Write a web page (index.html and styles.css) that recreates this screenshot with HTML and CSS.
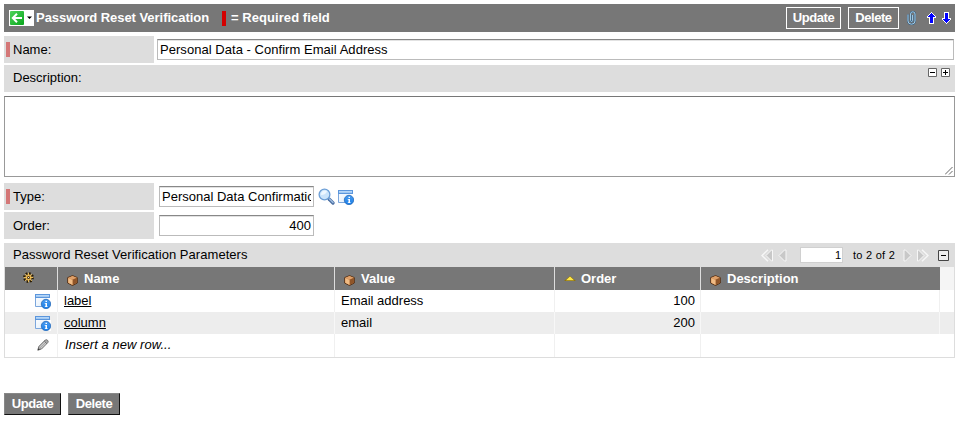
FILE: index.html
```html
<!DOCTYPE html>
<html lang="en">
<head>
<meta charset="utf-8">
<title>Password Reset Verification</title>
<link rel="stylesheet" href="styles.css">
</head>
<body>
<svg class="defs" width="0" height="0">
  <defs>
    <linearGradient id="gBlue" x1="0" y1="0" x2="0" y2="1"><stop offset="0" stop-color="#4a9cf0"/><stop offset="1" stop-color="#1a7fe8"/></linearGradient>
    <linearGradient id="gWin" x1="0" y1="0" x2="1" y2="1"><stop offset="0" stop-color="#fff"/><stop offset="1" stop-color="#dcebfa"/></linearGradient>
    <linearGradient id="gGreen" x1="0" y1="0" x2="1" y2="1"><stop offset="0" stop-color="#4fd35a"/><stop offset="1" stop-color="#08a51c"/></linearGradient>
    <symbol id="info" viewBox="0 0 16 15">
      <path d="M.5 .5h14v12H.5z" fill="url(#gWin)" stroke="#7ba6dc"/>
      <path d="M0 0h15v4H0z" fill="#5c96dc"/><path d="M1 1h13v1.800H1z" fill="#b5d6f8"/>
      <path d="M9 15V7.500h3V4h4v11z" fill="#fff"/>
      <circle cx="11" cy="10" r="4.700" fill="url(#gBlue)" stroke="#2468b8" stroke-width=".8"/>
      <path d="M10.500 6.800H12v1.300h-1.500zM9.700 9H12v3.200h.6v.8H9.800v-.8h.7V9.800h-.8z" fill="#fff"/>
    </symbol>
    <symbol id="box" viewBox="0 0 11 11">
      <path d="M5.500 .6 10.300 2.600V8L5.500 10.500.7 8V2.600z" fill="#c98247" stroke="#4c2a12" stroke-width=".9"/>
      <path d="M5.500 1 9.800 2.700 5.500 4.800 1.200 2.700z" fill="#dea06a"/>
      <path d="M5.500 4.800 9.900 2.800V7.800L5.500 10z" fill="#8f5529"/>
      <path d="M1.200 3 5.500 4.900V10L1.200 7.800z" fill="#f0bb84"/>
    </symbol>
  </defs>
</svg>

<header class="bar">
  <span class="back">
    <svg width="25" height="16" viewBox="0 0 25 16"><path d="M0 0h25v16H0z" fill="#fff"/><rect x="1" y="1" width="14" height="14" rx="1" fill="url(#gGreen)"/><path d="M8 3.800 3.800 8 8 12.200M4 8h9" fill="none" stroke="#fff" stroke-width="2"/><path d="M18 6.500h5L20.500 9z" fill="#000"/></svg>
  </span>
  <h1 class="title">Password Reset Verification</h1>
  <span class="mark"></span>
  <span class="legend">= Required field</span>
  <button class="hbtn hupdate">Update</button>
  <button class="hbtn hdelete">Delete</button>
  <svg class="clip" width="9" height="14" viewBox="0 0 9 14" fill="none"><path d="M1 3.500V10a3.500 3.200 0 0 0 7 0V3a2.200 2.200 0 0 0-4.400 0v6.500a1 1 0 0 0 2 0V4" stroke="#31587a" stroke-width="1.800"/><path d="M1 3.500V10a3.500 3.200 0 0 0 7 0V3a2.200 2.200 0 0 0-4.400 0v6.500a1 1 0 0 0 2 0V4" stroke="#a9d3ee" stroke-width="1"/></svg>
  <svg class="up" width="9" height="12" viewBox="0 0 9 12"><path d="M4 0h1v1h1v1h1v1h1v1h1v2H7v6H2V6H0V4h1V3h1V2h1V1h1z" fill="#fff"/><path d="M4 1h1v1h1v1h1v1h1v1H6v6H3V5H1V4h1V3h1V2h1z" fill="#00f"/></svg>
  <svg class="down" width="9" height="12" viewBox="0 0 9 12"><path d="M2 0h5v6h2v2H8v1H7v1H6v1H5v1H4v-1H3v-1H2V9H1V8H0V6h2z" fill="#fff"/><path d="M3 1h3v6h2v1H7v1H6v1H5v1H4v-1H3V9H2V8H1V7h2z" fill="#00f"/></svg>
</header>

<main>
  <div class="row name-row">
    <label class="label required">Name:</label>
    <div class="field wide"><span class="t-value">Personal Data - Confirm Email Address</span></div>
  </div>
  <div class="desc">
    <span>Description:</span>
    <svg class="size" width="22" height="9" viewBox="0 0 22 9"><path d="M.5 .5h8v8h-8zM13.500 .5h8v8h-8z" fill="#fff" stroke="#666"/><path d="M2 4h5v1H2zM15 4h5v1h-5zM17 2h1v5h-1z"/></svg>
  </div>
  <div class="area"><svg width="8" height="8" viewBox="0 0 8 8"><path d="M0 7.500 7.500 0M4 7.500 7.500 4" stroke="#555" stroke-width=".9"/></svg></div>
  <div class="row type-row">
    <label class="label required">Type:</label>
    <div class="field short"><div class="clipped">Personal Data Confirmatic</div></div>
    <svg class="lens" width="17" height="17" viewBox="0 0 17 17"><path d="m11 11 4 4" stroke="#4a6da0" stroke-width="3.200" stroke-linecap="round"/><path d="m11.500 11 3.500 3.500" stroke="#9dbce0" stroke-width="1.400" stroke-linecap="round"/><circle cx="6.500" cy="6.500" r="5.400" fill="#cbe4fb" stroke="#6d9fd6" stroke-width="1.300"/><path d="M3 7a4 4 0 0 1 6-4Q8 7 3 7z" fill="#eef7ff"/></svg>
    <svg class="type-info" width="16" height="15"><use href="#info"/></svg>
  </div>
  <div class="row">
    <label class="label">Order:</label>
    <div class="field short num">400</div>
  </div>

  <section class="list">
    <div class="list-head">
      <h2 class="list-title">Password Reset Verification Parameters</h2>
      <svg class="prev" width="26" height="13" viewBox="0 0 26 13" fill="#c8c8c8" stroke="#f6f6f6"><path d="M11.500 1v11H10.500L5 6.500 10.500 1zM25 1v11h-1.500L18 6.500 23.500 1z"/><path d="M7 .8 1 6.500l6 5.700" fill="none" stroke-width="1.500"/></svg>
      <div class="page">1</div>
      <span class="range">to 2 of 2</span>
      <svg class="next" width="26" height="13" viewBox="0 0 26 13" fill="#c8c8c8" stroke="#f6f6f6"><path d="M1 1v11h1.500L8 6.500 2.500 1zM14.500 1v11h1L21 6.500 15.500 1z"/><path d="m19 .8 6 5.700-6 5.700" fill="none" stroke-width="1.500"/></svg>
      <svg class="collapse" width="11" height="11" viewBox="0 0 11 11"><path d="M.5 .5h10v10H.5z" fill="#eee" stroke="#444"/><path d="M3 5h5v1H3z"/></svg>
    </div>
    <div class="grid">
      <div class="th gear"><svg width="11" height="11" viewBox="0 0 11 11"><circle cx="5.500" cy="5.500" r="4.400" fill="none" stroke="#2a1b00" stroke-width="2" stroke-dasharray="1.730 1.730"/><circle cx="5.500" cy="5.500" r="3.200" fill="#e9b44c" stroke="#3a2400" stroke-width=".6"/><path d="M5.500 .8v9.400M.8 5.500h9.400M2.200 2.200l6.600 6.600M8.800 2.200 2.200 8.800" stroke="#f2c45c" stroke-width=".9"/><circle cx="5.500" cy="5.500" r="1.500" fill="#4b3310"/><circle cx="5.500" cy="5.500" r=".6" fill="#fff"/></svg></div>
      <div class="th"><svg class="box" width="11" height="11"><use href="#box"/></svg><span>Name</span></div>
      <div class="th"><svg class="box" width="11" height="11"><use href="#box"/></svg><span>Value</span></div>
      <div class="th"><svg class="sort" width="12" height="5" viewBox="0 0 12 5"><path d="M0 5 6 0l6 5z" fill="#8f7410"/><path d="M2 4.300 6 .6l4 3.700z" fill="#ffe84a"/></svg><span>Order</span></div>
      <div class="th"><svg class="box" width="11" height="11"><use href="#box"/></svg><span>Description</span></div>
      <div class="th end"></div>

      <div class="td icon"><svg width="16" height="15"><use href="#info"/></svg></div>
      <div class="td"><a>label</a></div>
      <div class="td">Email address</div>
      <div class="td right">100</div>
      <div class="td"></div>
      <div class="td end"></div>

      <div class="td alt icon"><svg width="16" height="15"><use href="#info"/></svg></div>
      <div class="td alt"><a>column</a></div>
      <div class="td alt">email</div>
      <div class="td alt right">200</div>
      <div class="td alt"></div>
      <div class="td alt end"></div>

      <div class="td last icon pencil"><svg width="12" height="12" viewBox="0 0 12 12"><path d="m.8 11.200 1-3.700L8.300 1q1.200-.8 2.300.3t.2 2.300L4.500 10z" fill="#aaa" stroke="#666" stroke-width=".9"/><path d="m2.700 8 5.800-5.600M4 9.200l5.800-5.700" stroke="#ddd" stroke-width=".8"/><path d="m.8 11.200.6-2 1.400 1.300z" fill="#333"/><path d="m7.300 2 2.700 2.700" stroke="#666"/></svg></div>
      <div class="td last"><em class="t-insert">Insert a new row...</em></div>
      <div class="td last"></div>
      <div class="td last"></div>
      <div class="td last plain"></div>
      <div class="td last plain"></div>
    </div>
  </section>
</main>

<footer class="actions">
  <button class="btn bupdate">Update</button>
  <button class="btn bdelete">Delete</button>
</footer>
</body>
</html>
```
FILE: styles.css
```css
* { box-sizing: border-box; }
body { margin: 0; padding: 4px 2px 0 4px; background: #fff; color: #000; font: 13px/16px "Liberation Sans", Arial, sans-serif; white-space: nowrap; overflow: hidden; }
svg { display: block; flex: none; }
.defs { position: absolute; }
h1, h2 { margin: 0; font-size: 13px; line-height: 16px; }
button { font: bold 13px/16px "Liberation Sans", Arial, sans-serif; letter-spacing: -0.4px; color: #fff; background: #777; padding: 0; }

.bar { display: flex; align-items: center; height: 28px; background: #777; color: #fff; font-weight: bold; padding: 0 4px 0 5px; }
.title { width: 186px; margin-left: 2px; letter-spacing: -0.04px; }
.mark { width: 4px; height: 15px; background: #d40000; }
.legend { margin-left: 5px; margin-right: auto; letter-spacing: 0.06px; }
.hbtn { height: 22px; border: 1px solid #fff; letter-spacing: -0.45px; }
.hupdate { width: 55px; margin-right: 7px; }
.hdelete { width: 51px; margin-right: 8px; }
.clip { margin-right: 11px; }
.up { margin-right: 6px; }

.row { display: flex; height: 27px; margin-bottom: 2px; }
.name-row { margin-top: 4px; }
.label { display: flex; align-items: center; width: 150px; background: #ddd; padding-left: 9px; margin-right: 5px; }
.required { padding-left: 2px; }
.required::before { content: ""; width: 4px; height: 15px; margin-right: 3px; background: #d47777; }
.field { height: 21px; margin-top: 3px; border: 1px solid #bbb; border-top: 1px solid #888; box-shadow: inset 0 1px #e2e2e2; padding: 2px 2px 0; }
.name-row .label { margin-right: 3px; }
.wide { width: 797px; }
.t-value { letter-spacing: 0.04px; }
.short { width: 155px; }
.clipped { width: 149px; overflow: hidden; }
.num { text-align: right; }
.desc { display: flex; justify-content: space-between; height: 27px; background: #ddd; padding: 5px 5px 0 9px; }
.size { margin-top: -2px; }
.area { display: flex; align-items: flex-end; justify-content: flex-end; height: 81px; margin: 4px 0 6px; padding: 1px; border: 1px solid #999; border-top-color: #777; }
.lens { margin: 5px 0 0 4px; }
.type-info { margin: 7px 0 0 3px; }

.list { margin-top: 4px; border: solid #ddd; border-width: 0 1px 1px; }
.list-head { display: flex; align-items: center; height: 24px; background: #ddd; padding: 0 5px 0 8px; }
.list-title { font-weight: normal; margin-right: auto; letter-spacing: 0.05px; }
.prev { margin-right: 13px; }
.page { width: 43px; height: 16px; background: #fff; border: 1px solid #d0d0d0; font-size: 11px; line-height: 15px; text-align: right; padding-right: 1px; }
.range { width: 43px; margin: 0 7px 0 10px; font-size: 11px; letter-spacing: 0.25px; }
.collapse { margin-left: 9px; }
.grid { display: grid; grid-template-columns: 53px 277px 220px 146px 239px 1fr; grid-template-rows: 23px 22px 22px 23px; }
.th { display: flex; align-items: center; background: #777; color: #fff; font-weight: bold; border-right: 1px solid #ddd; padding-left: 9px; }
.th.gear { padding: 0 0 2px 18px; }
.th.end { background: #f5f5f5; border: 0; }
.box { margin: 3px 6px 0 0; }
.sort { margin-right: 5px; }
.th:nth-child(5) { border-right: 0; }
.td { border-right: 1px solid #f0f0f0; padding: 3px 6px 0; }
.alt { background: #ededed; border-right-color: #f7f7f7; }
.td.end, .td.plain { border-right: 0; }
.icon { padding: 4px 0 0 30px; }
.pencil { padding-left: 32px; padding-top: 5px; }
.right { text-align: right; padding-right: 5px; }
.td a { text-decoration: underline; text-underline-offset: 1px; }
.t-insert { margin-left: 1px; letter-spacing: 0.05px; }

.actions { display: flex; gap: 7px; margin-top: 35px; }
.btn { height: 22px; border: 1px solid #888; border-right-color: #111; border-bottom-color: #111; }
.bupdate { width: 57px; }
.bdelete { width: 52px; }
```
